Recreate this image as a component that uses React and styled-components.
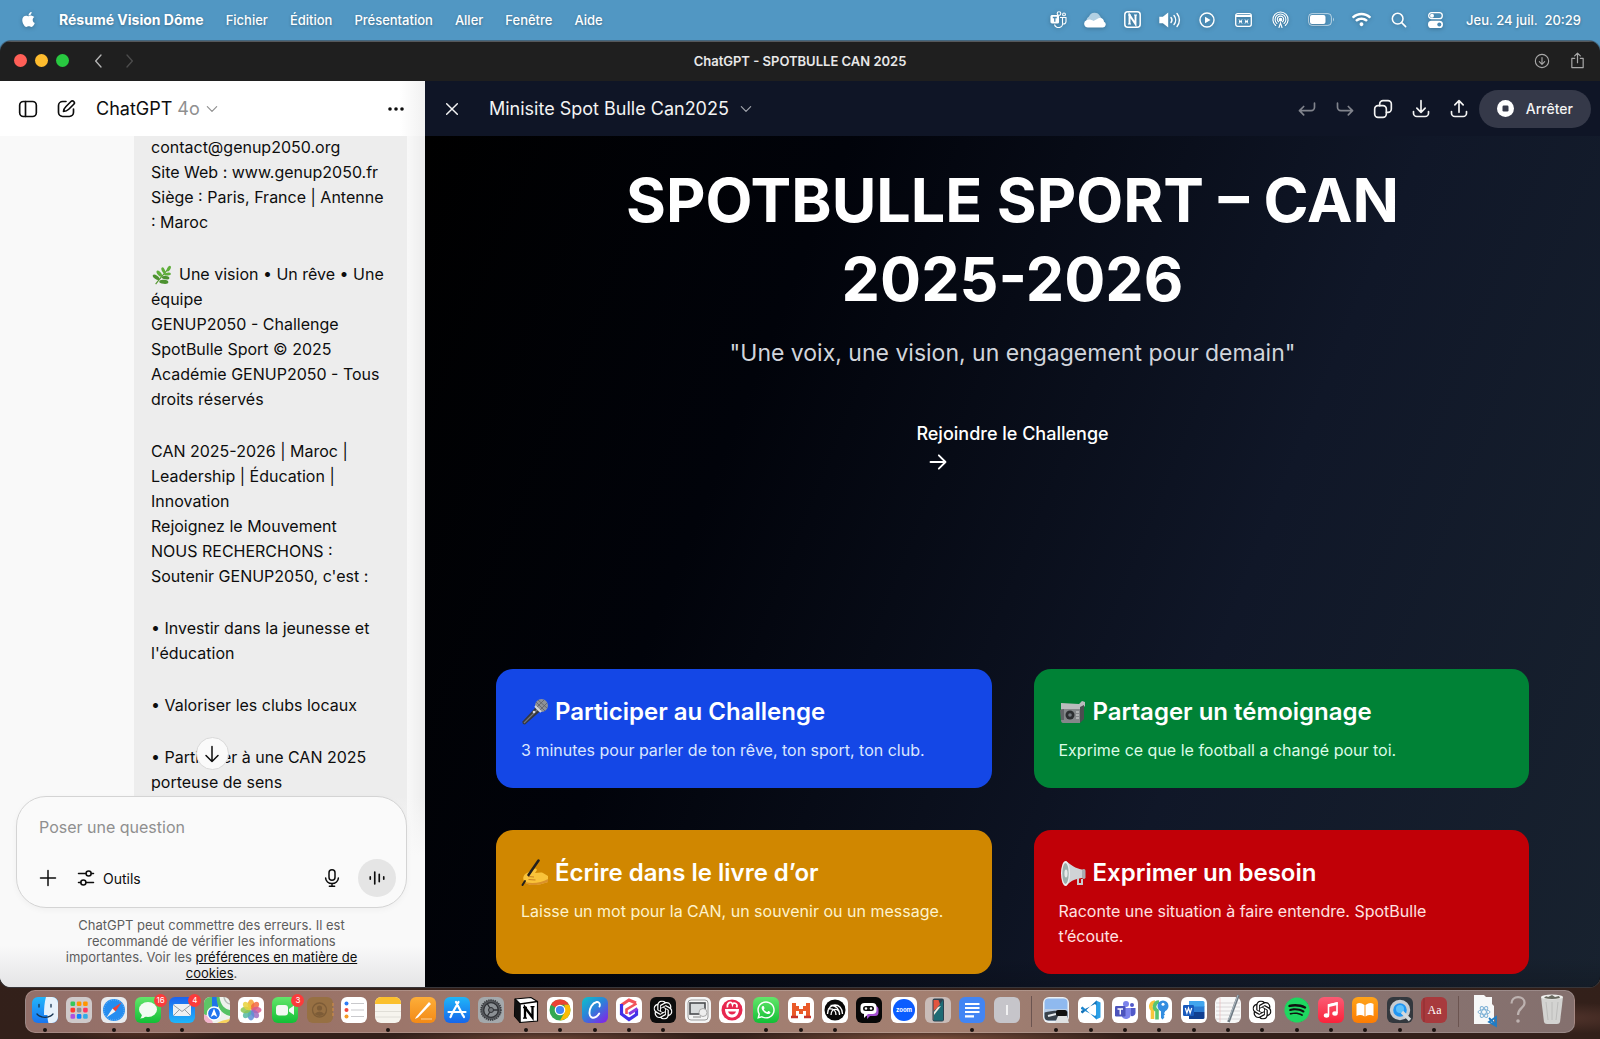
import React from "react";
import styled, { createGlobalStyle } from "styled-components";
import { FaApple, FaWhatsapp, FaSpotify, FaWifi } from "react-icons/fa";
import { SiOpenai } from "react-icons/si";

const GlobalStyle = createGlobalStyle`
  *, *::before, *::after { box-sizing: border-box; }
  html, body { margin: 0; }
  body { font-family: Inter, "Liberation Sans", sans-serif; color: #0d0d0d; }
  button, input, textarea { font: inherit; color: inherit; background: none; border: 0; padding: 0; margin: 0; }
  h1, h2, p { margin: 0; }
  svg { display: block; flex: none; }
`;

/* ---------- Desktop ---------- */

const Desktop = styled.div`
  height: 100vh;
  min-height: 640px;
  display: flex;
  flex-direction: column;
  overflow: hidden;
  background:
    radial-gradient(ellipse 90px 14px at 9% 99%, #5a3426, transparent),
    radial-gradient(ellipse 160px 10px at 34% 100%, #6b4536, transparent),
    radial-gradient(ellipse 200px 12px at 58% 100%, #7a4f3c, transparent),
    radial-gradient(ellipse 120px 16px at 97% 98%, #52342c, transparent),
    linear-gradient(to bottom, #5197c3 0, #5197c3 80px, #33221d 120px, #33201a 100%);
`;

const MenuBar = styled.header`
  height: 41px;
  padding: 0 19px 2px 20px;
  display: flex;
  align-items: center;
  justify-content: space-between;
  flex: none;
  color: #fff;
  font-size: 13px;
  font-weight: 500;
  text-shadow: 0 1px 3px rgba(0, 0, 0, 0.3);
  svg { filter: drop-shadow(0 1px 2px rgba(0, 0, 0, 0.25)); }
`;

const MenuList = styled.nav`
  display: flex;
  align-items: center;
  gap: 22px;
`;

const MenuItem = styled.button`
  font-weight: ${(p) => (p.$strong ? 700 : 500)};
  font-size: ${(p) => (p.$strong ? 14 : 13)}px;
  text-shadow: inherit;
`;

const StatusList = styled.div`
  display: flex;
  align-items: center;
`;

const StatusItem = styled.span`
  width: ${(p) => (p.$wide ? 44 : 37)}px;
  display: flex;
  justify-content: center;
`;

const Clock = styled.time`
  margin-left: 12px;
  white-space: pre;
`;

/* ---------- Window ---------- */

const Window = styled.main`
  flex: 1;
  min-height: 0;
  display: flex;
  flex-direction: column;
  border-radius: 11px;
  overflow: hidden;
  background: #1f1f1f;
  box-shadow: 0 0 0 1px rgba(60, 70, 80, 0.6);
`;

const TitleBar = styled.div`
  height: 40px;
  flex: none;
  display: grid;
  grid-template-columns: 1fr auto 1fr;
  align-items: center;
  padding: 0 14px 2px;
  border-top: 1px solid #55585b;
  color: #e8e8e8;
  font-size: 13px;
  font-weight: 600;
`;

const TitleGroup = styled.div`
  display: flex;
  align-items: center;
  justify-content: ${(p) => (p.$end ? "flex-end" : "flex-start")};
  gap: ${(p) => (p.$end ? 19 : 8)}px;
  color: #a8a8a8;
`;

const Light = styled.button`
  width: 13px;
  height: 13px;
  border-radius: 50%;
  background: ${(p) => p.$color};
`;

const NavButton = styled.button`
  width: 16px;
  height: 16px;
  margin-left: ${(p) => (p.$first ? 14 : 6)}px;
  color: ${(p) => (p.$dim ? "#4c4c4c" : "#b4b4b4")};
`;

const Panels = styled.div`
  flex: 1;
  min-height: 0;
  display: grid;
  grid-template-columns: 425px minmax(0, 1fr);
`;

/* ---------- Chat panel ---------- */

const Chat = styled.section`
  min-height: 0;
  display: flex;
  flex-direction: column;
  background: linear-gradient(to right, transparent 406px, rgba(0, 0, 0, 0.05)), #f9f9f9;
`;

const PanelHeader = styled.div`
  height: 55px;
  flex: none;
  display: flex;
  align-items: center;
  font-size: 18px;
`;

const ChatHeader = styled(PanelHeader)`
  padding: 0 20px 0 18px;
  gap: 18px;
  background: linear-gradient(to right, #fff 400px, #f1f1f1);
`;

const IconButton = styled.button`
  display: flex;
  align-items: center;
  justify-content: center;
  opacity: ${(p) => (p.$dim ? 0.5 : 1)};
`;

const ModelButton = styled.button`
  display: flex;
  align-items: center;
  gap: 5px;
  margin: 0 auto 0 2px;
  span { color: #8f8f8f; }
  svg { color: #8f8f8f; }
`;

const Thread = styled.div`
  flex: 1;
  min-height: 0;
  overflow: hidden;
  display: flex;
  flex-direction: column;
  align-items: flex-end;
  padding-right: 18px;
`;

const Bubble = styled.article`
  width: 273px;
  flex: 1 0 auto;
  margin-top: -1px;
  padding: 0 8px 40px 17px;
  background: #ededed;
  display: flex;
  flex-direction: column;
  gap: 27px;
  font-size: 16px;
  line-height: 25px;
`;

const Paragraph = styled.p`
  white-space: pre;
  svg { display: inline-block; vertical-align: -5px; margin-right: 6px; }
`;

const ComposerArea = styled.div`
  position: relative;
  flex: none;
  margin-top: -44px;
  padding: 0 18px 6px 16px;
  display: flex;
  flex-direction: column;
  background: linear-gradient(to bottom, transparent, #f9f9f9 60px, #f9f9f9 150px, #e4e4e6);
`;

const ScrollDown = styled.button`
  position: absolute;
  left: 50%;
  top: -59px;
  width: 33px;
  height: 33px;
  margin-left: -17px;
  border: 1px solid #d9d9d9;
  border-radius: 50%;
  background: #fafafa;
  display: grid;
  place-items: center;
`;

const Composer = styled.form`
  border: 1px solid #d4d4d4;
  border-radius: 30px;
  background: #fafafa;
  padding: 18px 10px 10px 22px;
  display: flex;
  flex-direction: column;
  gap: 20px;
  box-shadow: 0 2px 6px rgba(0, 0, 0, 0.04);
`;

const Prompt = styled.input`
  height: 24px;
  width: 100%;
  font-size: 16px;
  outline: 0;
  &::placeholder { color: #8f8f8f; opacity: 1; }
`;

const ComposerTools = styled.div`
  display: flex;
  align-items: center;
  gap: 20px;
  height: 38px;
`;

const ToolButton = styled.button`
  display: flex;
  align-items: center;
  gap: 8px;
  font-size: 14px;
  margin-right: auto;
`;

const VoiceButton = styled.button`
  width: 38px;
  height: 38px;
  margin-left: -3px;
  border-radius: 50%;
  background: #e5e5e5;
  display: grid;
  place-items: center;
`;

const Disclaimer = styled.p`
  margin-top: 9px;
  padding: 0 44px;
  text-align: center;
  font-size: 13px;
  line-height: 16px;
  color: #5d5d5d;
  a { color: #0d0d0d; }
`;

/* ---------- Canvas panel ---------- */

const Canvas = styled.section`
  min-height: 0;
  min-width: 0;
  display: flex;
  flex-direction: column;
  background: #000;
  color: #fff;
`;

const CanvasHeader = styled(PanelHeader)`
  padding: 0 9px 0 19px;
  gap: 18px;
  background: #0f1526;
  color: #f3f3f3;
`;

const CanvasTitle = styled.button`
  display: flex;
  align-items: center;
  gap: 10px;
  margin: 0 auto 0 11px;
  svg { color: #a3a6ae; }
`;

const StopButton = styled.button`
  height: 38px;
  margin-left: -8px;
  padding: 0 18px;
  border-radius: 19px;
  background: #353949;
  display: flex;
  align-items: center;
  gap: 12px;
  font-size: 14px;
  font-weight: 500;
`;

const Page = styled.div`
  flex: 1;
  min-height: 0;
  overflow: hidden;
  padding: 25px 71px 0;
  background:
    linear-gradient(to top, rgba(0, 0, 0, 0.15), transparent 30px),
    linear-gradient(112deg, #000 0%, #01030a 28%, #101728 66%, #18222f 100%);
`;

const Hero = styled.div`
  display: flex;
  flex-direction: column;
  align-items: center;
  text-align: center;
  padding-bottom: 197px;
`;

const HeroTitle = styled.h1`
  max-width: 900px;
  font-size: 61px;
  line-height: 79px;
  font-weight: 700;
`;

const Tagline = styled.p`
  margin-top: 17px;
  font-size: 23px;
  line-height: 34px;
  color: #d1d5dc;
`;

const JoinButton = styled.button`
  margin-top: 50px;
  display: grid;
  justify-items: start;
  font-size: 18px;
  line-height: 28px;
  font-weight: 500;
  svg { margin: 4px 0 0 12px; }
`;

const CardGrid = styled.div`
  display: grid;
  grid-template-columns: repeat(2, minmax(0, 1fr));
  gap: 42px;
`;

const Card = styled.article`
  padding: 25px;
  border-radius: 17px;
  background: ${(p) => p.$color};
`;

const CardTitle = styled.h2`
  display: flex;
  align-items: center;
  gap: 6px;
  font-size: 24px;
  line-height: 36px;
  font-weight: 600;
`;

const CardText = styled.p`
  margin-top: 8px;
  padding-right: 12px;
  font-size: 16px;
  line-height: 25px;
  color: ${(p) => p.$tint};
`;

/* ---------- Dock ---------- */

const DockBar = styled.nav`
  height: 43px;
  flex: none;
  margin: 3px 25px 6px;
  padding: 7px 8px 0 6px;
  border-radius: 10px;
  border: 1px solid rgba(255, 255, 255, 0.18);
  background: linear-gradient(to right, #93706a, #997166 15%, #a17e72 40%, #a37f70 60%, #8b7470 80%, #84706e);
  display: flex;
  justify-content: space-between;
  align-items: flex-start;
`;

const DockItem = styled.button`
  position: relative;
  width: 26px;
  height: 35px;
  display: flex;
  flex-direction: column;
  align-items: center;
  gap: 5px;
  margin-top: -1px;
`;

const RunningDot = styled.i`
  width: 4px;
  height: 4px;
  border-radius: 50%;
  background: #1b1210;
`;

const Badge = styled.span`
  position: absolute;
  top: -3px;
  right: -6px;
  min-width: 13px;
  height: 13px;
  border-radius: 7px;
  background: #fb3b3b;
  color: #fff;
  font-size: 8px;
  line-height: 13px;
  text-align: center;
`;

const DockSeparator = styled.span`
  width: 7px;
  height: 31px;
  margin-top: -2px;
  background: linear-gradient(#6b5450, #6b5450) center / 1px 100% no-repeat;
`;

/* ---------- Line icons ---------- */

const Line = ({ size = 20, width = 2, children, ...rest }) => (
  <svg width={size} height={size} viewBox="0 0 24 24" fill="none" stroke="currentColor" strokeWidth={width} strokeLinecap="round" strokeLinejoin="round" aria-hidden="true" {...rest}>
    {children}
  </svg>
);

const Chevron = ({ size = 14, d = "m4 8 8 8 8-8", width = 2 }) => (
  <Line size={size} width={width}><path d={d} /></Line>
);

const SidebarIcon = () => (
  <Line><rect x="2" y="3" width="20" height="18" rx="4.5" /><path d="M9 3v18" /></Line>
);
const EditIcon = () => (
  <Line><path d="M12 3H8a5 5 0 0 0-5 5v8a5 5 0 0 0 5 5h8a5 5 0 0 0 5-5v-4" /><path d="M9 15c0-3 1-4 3-6l6-6a2.3 2.3 0 0 1 3.300 3.300l-6 6c-2 2-3.300 2.700-6.300 2.700Z" /></Line>
);
const CloseIcon = () => <Line size={16} width={2.200}><path d="M4 4l16 16M20 4 4 20" /></Line>;
const DotsIcon = () => (
  <svg width="18" height="18" viewBox="0 0 18 18" fill="currentColor" aria-hidden="true"><circle cx="3" cy="9" r="1.800" /><circle cx="9" cy="9" r="1.800" /><circle cx="15" cy="9" r="1.800" /></svg>
);
const UndoIcon = () => <Line><path d="M8 9l-5 5 5 5M3 14h14a4 4 0 0 0 4-4V5" /></Line>;
const RedoIcon = () => <Line><path d="M16 9l5 5-5 5M21 14H7a4 4 0 0 1-4-4V5" /></Line>;
const CopyIcon = () => <Line><rect x="2" y="8" width="14" height="14" rx="4" /><path d="M8 8V6a4 4 0 0 1 4-4h6a4 4 0 0 1 4 4v6a4 4 0 0 1-4 4h-2" /></Line>;
const DownloadIcon = () => <Line><path d="M12 2v14M7 11l5 5 5-5M3 15v2a4 4 0 0 0 4 4h10a4 4 0 0 0 4-4v-2" /></Line>;
const UploadIcon = () => <Line><path d="M12 16V2M7 7l5-5 5 5M3 15v2a4 4 0 0 0 4 4h10a4 4 0 0 0 4-4v-2" /></Line>;
const StopIcon = () => (
  <svg width="17" height="17" viewBox="0 0 17 17" aria-hidden="true"><circle cx="8.500" cy="8.500" r="8.500" fill="#fff" /><rect x="5.500" y="5.500" width="6" height="6" rx="1.200" fill="#353949" /></svg>
);
const PlusIcon = () => <Line size={18}><path d="M12 2v20M2 12h20" /></Line>;
const SlidersIcon = () => (
  <Line size={18}><path d="M2 6h10M19 6h3M2 18h3M12 18h10" /><circle cx="15.500" cy="6" r="3.400" /><circle cx="8.500" cy="18" r="3.400" /></Line>
);
const MicIcon = () => (
  <Line size={18}><rect x="8" y="1" width="8" height="14" rx="4" /><path d="M3.500 12a8.500 7.500 0 0 0 17 0M12 19.500V23M8.500 23h7" /></Line>
);
const WaveIcon = () => <Line size={18} width={2.200}><path d="M3 10.500v3M9 4v16M15 7v10M21 10.500v3" /></Line>;
const ArrowDown = () => <Line size={18}><path d="M12 2v20M4 14l8 8 8-8" /></Line>;
const ArrowRight = () => <Line size={20} width={2.200}><path d="M3 12h18M13 4l8 8-8 8" /></Line>;

/* ---------- Menu bar status icons ---------- */

const TeamsMono = () => (
  <svg width="17" height="17" viewBox="0 0 17 17" fill="none" stroke="#fff" strokeWidth="1.100" aria-hidden="true">
    <rect x="1" y="4.500" width="7.500" height="7.500" rx="1" fill="#fff" /><path d="M2.800 6.500h4M4.800 6.500V10.700" stroke="#4787b1" strokeWidth="1.300" />
    <circle cx="9" cy="2.600" r="1.800" /><circle cx="14" cy="3.400" r="1.400" />
    <path d="M10 6.500h6v4a2.500 2.500 0 0 1-3 2.500M12.500 6.500v5a4 4 0 0 1-8 2" />
  </svg>
);
const CloudMono = () => (
  <svg width="23" height="16" viewBox="0 0 23 16" aria-hidden="true">
    <path d="M4 12a4.500 4.500 0 0 1 1-7.500A6 6 0 0 1 16 4l2 3L9 12Z" fill="#b3d0e2" />
    <path d="M4 15.500a3.800 3.800 0 0 1-1.500-7.300C5 7 7 7.500 9.500 9L14 6.500c3-1.500 6 .5 6 3.300a3 3 0 0 1-1 5.700Z" fill="#fff" />
  </svg>
);
const NMono = () => (
  <svg width="17" height="17" viewBox="0 0 17 17" fill="none" stroke="#fff" aria-hidden="true">
    <rect x=".8" y=".8" width="15.400" height="15.400" rx="3" strokeWidth="1.500" /><path d="M5.500 13V4l6 9V4" strokeWidth="1.900" /><path d="M4 4h3M10 4h3M4 13h3" strokeWidth="1" />
  </svg>
);
const SoundMono = () => (
  <svg width="22" height="16" viewBox="0 0 22 16" fill="none" stroke="#fff" strokeWidth="1.400" strokeLinecap="round" aria-hidden="true">
    <path d="M1 5.500h3L8.500 2v12L4 10.500H1Z" fill="#fff" /><path d="M12 5.500a4 4 0 0 1 0 5M15 3.500a7 7 0 0 1 0 9M18 1.500a10 10 0 0 1 0 13" />
  </svg>
);
const PlayMono = () => (
  <svg width="16" height="16" viewBox="0 0 16 16" aria-hidden="true"><circle cx="8" cy="8" r="7" fill="none" stroke="#fff" strokeWidth="1.400" /><path d="M6 4.700v6.600L11.500 8Z" fill="#fff" /></svg>
);
const PanelMono = () => (
  <svg width="17" height="14" viewBox="0 0 17 14" fill="none" stroke="#fff" aria-hidden="true">
    <rect x=".7" y=".7" width="15.600" height="12.600" rx="2" strokeWidth="1.300" /><path d="M1 3h15" strokeWidth="2" /><path d="m4 6.500 3 4m0-4-3 4M4 8.500h3M10 6.500l3 4m0-4-3 4M10 8.500h3" strokeWidth="1" />
  </svg>
);
const AirdropMono = () => (
  <svg width="17" height="17" viewBox="0 0 17 17" fill="none" stroke="#fff" strokeWidth="1.100" strokeLinecap="round" aria-hidden="true">
    <path d="M3.700 14.500a7.600 7.600 0 1 1 9.600 0M5 12.500a5.400 5.400 0 1 1 7 0M6.500 10.800a3.200 3.200 0 1 1 4 0" /><circle cx="8.500" cy="8.700" r="1.300" fill="#fff" /><path d="M7 16.500 8.500 12l1.500 4.500" />
  </svg>
);
const BatteryMono = () => (
  <svg width="27" height="13" viewBox="0 0 27 13" aria-hidden="true">
    <rect x=".6" y=".6" width="22.800" height="11.800" rx="3.500" fill="none" stroke="#fff" strokeOpacity=".6" /><rect x="2" y="2" width="15.500" height="9" rx="2" fill="#fff" /><path d="M25 4.500v4q1.600-2 0-4Z" fill="#fff" opacity=".7" />
  </svg>
);
const ControlMono = () => (
  <svg width="15" height="16" viewBox="0 0 15 16" fill="none" aria-hidden="true">
    <rect x=".7" y=".7" width="13.600" height="6" rx="3" stroke="#fff" strokeWidth="1.300" /><circle cx="4" cy="3.700" r="2" fill="#fff" /><rect y="8.800" width="15" height="7.200" rx="3.600" fill="#fff" /><circle cx="11.300" cy="12.400" r="2" fill="#4787b1" />
  </svg>
);

/* ---------- Emoji drawings ---------- */

const Herb = () => (
  <svg width="22" height="20" viewBox="0 0 22 22" aria-hidden="true">
    <path d="M4 21C8 16 13 10 19 3" stroke="#5a9a35" strokeWidth="1.300" fill="none" />
    <g fill="#5fae3a"><ellipse cx="18.500" cy="4" rx="1.700" ry="3.400" transform="rotate(30 18.500 4)" /><ellipse cx="12.500" cy="6" rx="1.700" ry="3.600" transform="rotate(-25 12.500 6)" /><ellipse cx="17" cy="10" rx="3.800" ry="1.600" transform="rotate(-5 17 10)" /><ellipse cx="8" cy="9.500" rx="2" ry="4" transform="rotate(-40 8 9.500)" /></g>
    <g fill="#4c9130"><ellipse cx="15" cy="14" rx="4.200" ry="1.800" transform="rotate(8 15 14)" /><ellipse cx="4.500" cy="13.500" rx="2" ry="4.200" transform="rotate(-55 4.500 13.500)" /><ellipse cx="13" cy="18.500" rx="5" ry="2.200" transform="rotate(5 13 18.500)" /></g>
  </svg>
);
const MicEmoji = () => (
  <svg width="28" height="28" viewBox="0 0 28 28" aria-hidden="true">
    <path d="M15 9 1.500 23.500q-.5 3 2.500 3L19.500 13Z" fill="#36383d" /><path d="M16 12 3 25" stroke="#73757b" strokeWidth="1.200" />
    <circle cx="20.500" cy="7.500" r="6.500" fill="#8f9297" /><path d="m15 4 9 9M17 2l9 8M15 10l8-8M18 13l8-8" stroke="#5d6066" strokeWidth=".8" /><path d="m14 8 6 6" stroke="#d5d7da" strokeWidth="2" /><circle cx="13" cy="14" r="1.300" fill="#d8dadd" />
  </svg>
);
const CameraEmoji = () => (
  <svg width="28" height="28" viewBox="0 0 28 28" aria-hidden="true">
    <path d="M2 9h19v16H4q-2 0-2-3Z" fill="#84878a" /><path d="m2 5 18 1 3-3 3 1v4l-4 3H2Z" fill="#b9bbbd" /><path d="m21 9 4-2v14l-4 4Z" fill="#4b4d50" /><circle cx="11" cy="17" r="4.500" fill="#2c2e31" /><circle cx="11" cy="17" r="1.800" fill="#71777d" /><path d="M17 14h3M17 17h3M17 20h3" stroke="#d9dbdc" /><path d="m1 12 4-1v11H2Z" fill="#606367" />
  </svg>
);
const WritingEmoji = () => (
  <svg width="28" height="28" viewBox="0 0 28 28" aria-hidden="true">
    <path d="M4 23c-3-3-2-7 2-9l6-4c3-1.500 5 .5 3 2.500l-1 1.500c3 0 6-1 8 0l5 3v6c-6 2-9 3-13 3-4 .3-8-.5-10-3Z" fill="#f9c33a" /><path d="M27 20v3c-6 2-9 3-13 3-4 .3-8-.5-10-3 7 2 16 1 23-3Z" fill="#d9912a" /><path d="m7 17.500 6 .5M7.500 20.500l7 .5" stroke="#c98220" strokeWidth="1.100" /><path d="M17.500 1.500 7.500 16" stroke="#22201e" strokeWidth="2.500" strokeLinecap="round" /><path d="m4 22-2.500 4" stroke="#22201e" strokeWidth="2" strokeLinecap="round" />
  </svg>
);
const MegaphoneEmoji = () => (
  <svg width="28" height="28" viewBox="0 0 28 28" aria-hidden="true">
    <path d="M7 2c7 6 12 8 18 9v8c-6 0-13 2-18 8Z" fill="#d0d3d6" /><ellipse cx="6.500" cy="14.500" rx="4.500" ry="12.500" fill="#eceeef" /><ellipse cx="6.500" cy="14.500" rx="3.200" ry="10.500" fill="#9db0ac" /><ellipse cx="7" cy="14.500" rx="1.600" ry="4" fill="#e7eae9" /><rect x="23" y="10" width="3.500" height="10" rx="1.700" fill="#a9adb1" /><path d="M19 19v6h4v-5" fill="none" stroke="#c8cbcd" strokeWidth="2" />
  </svg>
);

/* ---------- Dock icons ---------- */

const Tile = ({ fill = "#fff", children }) => (
  <svg width="26" height="26" viewBox="0 0 26 26" overflow="visible" aria-hidden="true">
    {fill !== "none" && <rect width="26" height="26" rx="6" fill={fill} />}
    {children}
  </svg>
);

const Gradient = ({ id, from, to }) => (
  <linearGradient id={id} x1="0" y1="0" x2="0" y2="1"><stop stopColor={from} /><stop offset="1" stopColor={to} /></linearGradient>
);

const petals = ["#f7a331", "#f26a3f", "#d85a8b", "#9c6cc0", "#5c8ed6", "#55b7a2", "#8cc653", "#e8d13b"];
const launchpad = ["#35c759", "#ff9500", "#ff9500", "#ff3b30", "#8e8e93", "#ff375f", "#af52de", "#0a84ff", "#32ade6"];

const dockApps = [
  { name: "Finder", running: true, art: <Tile fill="url(#g-finder)"><Gradient id="g-finder" from="#22b5fb" to="#1a75f0" /><path d="M14 0h6a6 6 0 0 1 6 6v14a6 6 0 0 1-6 6h-3.500c-1-3-1-6-1-8H12C12 11 12.500 5 14 0Z" fill="#e6f1fb" /><path d="M7 7.500v2.500M19 7.500v2.500M5 17c4 4.500 12 4.500 16 0" stroke="#16324f" strokeWidth="1.300" fill="none" strokeLinecap="round" /></Tile> },
  { name: "Launchpad", art: <Tile fill="#cfc9ca">{launchpad.map((c, i) => <rect key={i} x={4.500 + (i % 3) * 6.300} y={4.500 + Math.floor(i / 3) * 6.300} width="4.600" height="4.600" rx="1.300" fill={c} />)}</Tile> },
  { name: "Safari", running: true, art: <Tile fill="#e9ebee"><circle cx="13" cy="13" r="11" fill="#258df0" /><circle cx="13" cy="13" r="10" fill="none" stroke="#8ec6f8" strokeDasharray=".6 1.500" /><path d="m20.500 5.500-9 6 3 3Z" fill="#f04438" /><path d="m5.500 20.500 6-9 3 3Z" fill="#f5f5f5" /></Tile> },
  { name: "Messages", running: true, badge: "16", art: <Tile fill="url(#g-msg)"><Gradient id="g-msg" from="#63e66a" to="#12bf36" /><ellipse cx="13" cy="12.500" rx="9" ry="7.500" fill="#f3fbf3" /><path d="M7 17q0 3-2 4.500 4 0 6-2.500Z" fill="#f3fbf3" /></Tile> },
  { name: "Mail", running: true, badge: "4", art: <Tile fill="url(#g-mail)"><Gradient id="g-mail" from="#1c62ef" to="#1fb6fa" /><rect x="4" y="7" width="18" height="12" rx="2" fill="#eef0f2" /><path d="m4.500 8 8.500 6.500L21.500 8M4.500 18.500l6-6M21.500 18.500l-6-6" fill="none" stroke="#8b929a" strokeWidth=".9" /></Tile> },
  { name: "Plans", art: <Tile fill="#eef1ec"><path d="M0 6a6 6 0 0 1 6-6h2v15L0 19Z" fill="#5ec466" /><path d="M8 0h6v10H8Z" fill="#1f74ea" /><path d="M15.500 0c1 8 5 12 10.500 13v6C17 17 13 10 12.500 0Z" fill="#56c263" /><path d="M20 0q1 6 6 7" stroke="#b8bdb8" strokeWidth="1.500" fill="none" /><path d="M0 17c5 3 8 5 9 9H6q-6 0-6-6Z" fill="#f3b3cb" /><path d="M13 26q5-3 13-4-1 4-6 4Z" fill="#f8d15b" /><circle cx="10" cy="16.500" r="6.500" fill="#2274ee" stroke="#fff" strokeWidth="1.300" /><path d="m10 11.500 3.300 8.500L10 18l-3.300 2Z" fill="#fff" /></Tile> },
  { name: "Photos", art: <Tile>{petals.map((c, i) => <ellipse key={c} cx="13" cy="7.500" rx="3.300" ry="5" fill={c} opacity=".85" transform={`rotate(${i * 45} 13 13)`} />)}</Tile> },
  { name: "FaceTime", badge: "3", art: <Tile fill="url(#g-msg)"><rect x="4" y="8" width="12" height="10.500" rx="3" fill="#f3f8f3" /><path d="m17 12 5-3.500v9.500l-5-3.500Z" fill="#f3f8f3" /></Tile> },
  { name: "Contacts", art: <Tile fill="#977043"><path d="M26 6v14" stroke="#c98a4a" strokeWidth="1.300" strokeDasharray="3 2" /><circle cx="12.500" cy="13" r="7" fill="none" stroke="#7d5c37" strokeWidth="1.300" /><circle cx="12.500" cy="11" r="2.600" fill="#7d5c37" /><path d="M7.500 17q5-5 10 0-5 4-10 0Z" fill="#7d5c37" /></Tile> },
  { name: "Rappels", art: <Tile><circle cx="5.500" cy="6.500" r="2" fill="#2e7cf6" /><circle cx="5.500" cy="13" r="2" fill="#f1483f" /><circle cx="5.500" cy="19.500" r="2" fill="#f59a23" /><path d="M10 6.500h13M10 13h13M10 19.500h13" stroke="#c9c9cc" /></Tile> },
  { name: "Notes", running: true, art: <Tile fill="#f6f4ee"><path d="M0 7V6a6 6 0 0 1 6-6h14a6 6 0 0 1 6 6v1Z" fill="#fbc02d" /><path d="M0 14.500h26M0 20h26" stroke="#dbd8d0" strokeWidth=".8" /></Tile> },
  { name: "Pages", art: <Tile fill="url(#g-pages)"><Gradient id="g-pages" from="#fdae39" to="#f38a16" /><path d="M6 20 19 5l2 2L8 20.500 5 22Z" fill="#fff" /><path d="M11 22h11" stroke="#fbd09a" /></Tile> },
  { name: "App Store", art: <Tile fill="url(#g-store)"><Gradient id="g-store" from="#1fb5f8" to="#1766ea" /><path d="M14.500 5 7.300 18M12 5l7 13.500M4.500 15h17M6.500 20l.7-1.300M20 20l-.8-1.500" stroke="#fff" strokeWidth="2.200" strokeLinecap="round" /></Tile> },
  { name: "Réglages", art: <Tile fill="#a4a9ac"><circle cx="13" cy="13" r="10" fill="#55585c" stroke="#34363a" strokeWidth="1.500" strokeDasharray="1.300 .9" /><circle cx="13" cy="13" r="7.300" fill="#8b9094" stroke="#2f3135" strokeWidth="1.300" /><path d="M13 13h7M13 13 9.500 7M13 13l-3.500 6" stroke="#2f3135" strokeWidth="1.300" /><circle cx="13" cy="13" r="2.500" fill="#717579" stroke="#2f3135" /></Tile> },
  { name: "Notion", running: true, art: <Tile fill="none"><path d="m2 2 16-1.500 6.500 4V24L7 25.500 1.500 19Z" fill="#fff" stroke="#000" strokeWidth="1.200" /><path d="m2 2 5 5 17.500-2.500M7 7v18.500" stroke="#000" strokeWidth="1.500" fill="none" /><path d="m2 2 5 5v18.500L1.500 19Z" fill="#111" /><path d="M12 21V10.500l7.500 10V9.500" stroke="#000" strokeWidth="2.300" fill="none" /><path d="M10 10.500h4M17.500 9.700h4M10 21.200h4" stroke="#000" strokeWidth="1.300" /></Tile> },
  { name: "Chrome", running: true, art: <Tile><circle cx="13" cy="13" r="10.500" fill="#33a853" /><path d="M13 13 3.900 7.800A10.500 10.500 0 0 1 22.100 7.800H13Z" fill="#ea4335" /><path d="M22.100 7.800A10.500 10.500 0 0 1 13 23.500L17.500 15.500V7.800Z" fill="#fbbc05" /><circle cx="13" cy="13" r="5.300" fill="#fff" /><circle cx="13" cy="13" r="4.100" fill="#4285f4" /></Tile> },
  { name: "Canva", running: true, art: <Tile fill="url(#g-canva)"><linearGradient id="g-canva" x1="0" y1="0" x2=".8" y2="1"><stop stopColor="#0cc2cb" /><stop offset=".5" stopColor="#2b83d9" /><stop offset="1" stopColor="#7c2be6" /></linearGradient><path d="M17.500 9.500c1-2.500-.5-5-2.800-4.500-4.500 1-7.500 6.500-7.200 11.500.2 4 3.500 5 6 3.700 1.700-.8 2.900-2.200 3.700-3.700" stroke="#fff" strokeWidth="1.900" fill="none" strokeLinecap="round" /></Tile> },
  { name: "Genially", running: true, art: <Tile><path d="M20 6 13 3 5.500 8" stroke="#f2545b" strokeWidth="3" fill="none" /><path d="M5.500 7v10l7.500 5.500 7.500-5V12" stroke="#4230e8" strokeWidth="3.200" fill="none" /><path d="m20.500 6.500-10 6V17" stroke="#f2545b" strokeWidth="2.600" fill="none" /><path d="m13 17 8.500-5.500" stroke="#8a3be0" strokeWidth="3" /></Tile> },
  { name: "ChatGPT", running: true, art: <Tile fill="#0c0c0c"><SiOpenai x="3.500" y="3.500" size="19" color="#fff" /></Tile> },
  { name: "Capture", art: <Tile fill="#f4f4f4"><rect x="3" y="3" width="20" height="20" rx="3" fill="none" stroke="#9b9b9b" /><rect x="5" y="6" width="15" height="11" fill="#d8dbdc" stroke="#4a4c4f" strokeWidth="1.600" /><circle cx="18" cy="15.500" r="4" fill="#eee" stroke="#aaa" /><path d="M8 20h8" stroke="#888" /></Tile> },
  { name: "Boo", art: <Tile><circle cx="13" cy="13" r="10.500" fill="#e8274f" /><path d="M6 12h14c0 5-3 8.500-7 8.500S6 17 6 12Z" fill="#fff" /><path d="M8.500 10.500c-1-5 4-7 5-3 1-3 6-1 4 3" fill="none" stroke="#fff" strokeWidth="1.700" /><path d="M9 14.500h8q-1 3-4 3t-4-3Z" fill="#e8274f" /></Tile> },
  { name: "WhatsApp", running: true, art: <Tile fill="url(#g-msg)"><FaWhatsapp x="3" y="3" size="20" color="#fff" /></Tile> },
  { name: "Mistral", running: true, art: <Tile><path d="M4 20V6h4v3h3v3h4V9h3V6h4v14h-4v-6h-3v3h-4v-3H8v6Z" fill="#ea5a2a" /><path d="M3 20h7M16 20h7" stroke="#c8352a" strokeWidth="2.600" /></Tile> },
  { name: "NordPass", running: true, art: <Tile><circle cx="13" cy="13" r="10.500" fill="#080808" /><path d="M5.500 17c0-12 15-12 15 0M9 18c0-8 9-7 8.500 0M6 12c6-1 8 2 8 6M8.500 8.500c6 0 9 4 9 9" stroke="#fff" strokeWidth="1.300" fill="none" /></Tile> },
  { name: "Poe", art: <Tile fill="#080808"><path d="M9 9h10q3.500 0 3.500 3.500v3Q22.500 19 19 19h-5l-3 3v-3H9Z" fill="#a34fd0" /><rect x="4.500" y="6" width="16" height="11" rx="4" fill="#fff" /><path d="M8 16v5l5-5Z" fill="#fff" /><rect x="7" y="9" width="11" height="5" rx="2.500" fill="#111" /><circle cx="10" cy="11.500" r="1.200" fill="#fff" /><circle cx="15" cy="11.500" r="1.200" fill="#fff" /></Tile> },
  { name: "Zoom", art: <Tile><circle cx="13" cy="13" r="11" fill="#0b5cff" /><text x="13" y="15" fontSize="6" fontWeight="700" textAnchor="middle" fill="#fff">zoom</text></Tile> },
  { name: "iPhone", art: <Tile fill="#c9bcb8"><rect x="7.500" y="1.500" width="11.500" height="23" rx="2" fill="#2e4250" /><path d="M8.500 3h5l3.500 10-8.500 10Z" fill="#e2553f" /><path d="M18 3c-4 5-5 8-9.500 11v9.500H18Z" fill="#1e6b74" /><path d="M13 10 9 15v3l7-9Z" fill="#f4e9df" /></Tile> },
  { name: "Docs", running: true, art: <Tile fill="#4285f4"><path d="M6 7h14.500M6 11h14.500M6 15h14.500M6 19.300h9" stroke="#fff" strokeWidth="2.200" /></Tile> },
  { name: "Raccourci", art: <Tile fill="#c6c5ca"><path d="M13 8v10" stroke="#fff" strokeWidth="1.500" /></Tile> },
  { name: "Aperçu", separated: true, running: true, art: <Tile fill="#edf0f3"><rect x="1.500" y="1.500" width="23" height="22" rx="4" fill="#8fb9ef" /><path d="M1.500 12h23v5h-23Z" fill="#b9cde6" /><path d="M1.500 15.500c7-2 15-2 23-1v5q0 4-4 4h-15q-4 0-4-4Z" fill="#39424c" /><path d="m5 19 8-2" stroke="#e6eaed" strokeWidth="2" /><rect x="13" y="13" width="11" height="6" rx="2" fill="#111" /><path d="m15 19-3 7h14l-2-7Z" fill="#dfe1e2" /></Tile> },
  { name: "VS Code", running: true, art: <Tile><path d="m18 3.500 4.500 2v15l-4.500 2Z" fill="#2a9fe6" /><path d="m18.500 3.500-14 13-1.500-1.200 0-1.300L17 7l1.500 1.500Z" fill="#1372b8" /><path d="m18.500 22.500-14-13L3 10.700V12l14 7 1.500-1.500Z" fill="#1b86cf" /><path d="M18 8.500v9L12 13Z" fill="#fff" /></Tile> },
  { name: "Teams", running: true, art: <Tile><circle cx="14" cy="7" r="3" fill="#7b83eb" /><circle cx="20" cy="8" r="2" fill="#5059c9" /><path d="M10 11h9v6a5 5 0 0 1-9 3Z" fill="#7b83eb" /><path d="M19 11h4.500v5a3.500 3.500 0 0 1-4.500 3Z" fill="#5059c9" /><rect x="3" y="9" width="10.500" height="10.500" rx="1.200" fill="#4b53bc" /><path d="M5.500 12h5.500M8.250 12v5.500" stroke="#fff" strokeWidth="1.400" /></Tile> },
  { name: "Mots de passe", running: true, art: <Tile><path d="M9 5a4.500 4.500 0 0 0-2.500 8v9" stroke="#f7c63c" strokeWidth="3.600" fill="none" /><path d="M13 5a4.500 4.500 0 0 0-2 8.500v9" stroke="#57c471" strokeWidth="3.600" fill="none" /><circle cx="17" cy="9" r="5.500" fill="#338de0" /><path d="M15 12h4v3l-1 1 1 1.500-1.500 1.500 1 1-1.800 2.500L15 21Z" fill="#338de0" /><circle cx="17" cy="7.300" r="1.500" fill="#fff" /></Tile> },
  { name: "Word", running: true, art: <Tile><path d="M8 4h14a1.500 1.500 0 0 1 1.500 1.500V10H8Z" fill="#41a5ee" /><path d="M8 9.500h15.500V15H8Z" fill="#2b7cd3" /><path d="M8 15h15.500v5.500A1.500 1.500 0 0 1 22 22H8Z" fill="#103f91" /><rect x="2" y="8" width="11" height="11" rx="1.200" fill="#185abd" /><path d="m4.300 11 1.600 5 1.600-5 1.600 5 1.600-5" stroke="#fff" strokeWidth="1.200" fill="none" /></Tile> },
  { name: "TextEdit", running: true, art: <Tile fill="#f7f7f7"><path d="M1 6h24M1 10h24M1 14h24M1 18h24M1 22h24" stroke="#d4d0d2" strokeWidth=".9" /><path d="M5 1v24" stroke="#e9b3b3" strokeWidth=".6" /><path d="m23.500-2-10 27" stroke="#6d7881" strokeWidth="2.600" /><path d="m23-2-9.500 25" stroke="#b4bfc7" strokeWidth=".9" /></Tile> },
  { name: "ChatGPT Atlas", running: true, art: <Tile><SiOpenai x="3.500" y="3.500" size="19" color="#111" /></Tile> },
  { name: "Spotify", running: true, art: <Tile fill="none"><circle cx="13" cy="13" r="12" fill="#101010" /><FaSpotify x="0" y="0" size="26" color="#1ed760" /></Tile> },
  { name: "Musique", running: true, art: <Tile fill="url(#g-music)"><Gradient id="g-music" from="#fb5b74" to="#fa233b" /><path d="M10.500 18V8l8.500-2v10" stroke="#fff" strokeWidth="1.600" fill="none" /><path d="M10 7.500 19.500 5v3L10 10.300Z" fill="#fff" /><ellipse cx="8.500" cy="18.500" rx="2.700" ry="2.200" fill="#fff" /><ellipse cx="17" cy="16.500" rx="2.700" ry="2.200" fill="#fff" /></Tile> },
  { name: "Livres", running: true, art: <Tile fill="url(#g-books)"><Gradient id="g-books" from="#ffa41a" to="#fc7c03" /><path d="M12.500 8Q8 4.500 4.500 7v12q4-2 8 .5ZM13.500 8q4.500-3.500 8-1v12q-4-2-8 .5Z" fill="#fff" /></Tile> },
  { name: "QuickTime", running: true, art: <Tile fill="#33383e"><circle cx="13" cy="13" r="8.500" fill="#2196f3" stroke="#c7ccd1" strokeWidth="3.400" /><circle cx="13" cy="12" r="4" fill="#5cc0fb" /><path d="m15 15 8 8" stroke="#d5d9dc" strokeWidth="3.400" /></Tile> },
  { name: "Dictionnaire", running: true, art: <Tile fill="#a83a3d"><path d="M3 1v24" stroke="#8c2c30" /><text x="13.500" y="17" fontSize="12" fontFamily="Liberation Serif, serif" textAnchor="middle" fill="#fff">Aa</text></Tile> },
  { name: "Téléchargements", separated: true, art: <Tile fill="none"><path d="M3-2h10l2 2h6v7l2 2v18H3Z" fill="#f7f8f8" /><g fill="none" stroke="#7fb2d6"><ellipse cx="13" cy="15" rx="6" ry="2.300" /><ellipse cx="13" cy="15" rx="6" ry="2.300" transform="rotate(60 13 15)" /><ellipse cx="13" cy="15" rx="6" ry="2.300" transform="rotate(120 13 15)" /></g><path d="m25 20-7 5 7 4Zm-7 1 7 7" fill="none" stroke="#1f7cc4" strokeWidth="1.800" /></Tile> },
  { name: "Inconnu", art: <Tile fill="none"><path d="M6.500 6.500c-.5-8.500 13.500-8.500 13-.5 0 5-6.500 5-6.500 12" stroke="#bdb2b0" strokeWidth="2.200" fill="none" /><circle cx="13" cy="24" r="1.800" fill="#bdb2b0" /></Tile> },
  { name: "Corbeille", art: <Tile fill="none"><path d="M2 0h22l-3 25q-.4 2-3 2H8q-2.600 0-3-2Z" fill="#d3d3d1" /><path d="M7 5l2 18M13 5v18M19 5l-2 18" stroke="#bcbcba" /><ellipse cx="13" cy="0" rx="11" ry="2.600" fill="#efefed" /><path d="M5 1q2-3 4-1l4-2 3 2 4-1 1 2q-8 2-16 0Z" fill="#68695f" /></Tile> },
];

/* ---------- Content ---------- */

const menus = ["Fichier", "Édition", "Présentation", "Aller", "Fenêtre", "Aide"];

const statusIcons = [
  { key: "teams", icon: <TeamsMono /> },
  { key: "cloud", icon: <CloudMono /> },
  { key: "notion", icon: <NMono /> },
  { key: "sound", icon: <SoundMono /> },
  { key: "play", icon: <PlayMono /> },
  { key: "panel", icon: <PanelMono /> },
  { key: "airdrop", icon: <AirdropMono /> },
  { key: "battery", wide: true, icon: <BatteryMono /> },
  { key: "wifi", icon: <FaWifi size={19} /> },
  { key: "search", icon: <Line size={16} width={2.300}><circle cx="10" cy="10" r="8" /><path d="m16 16 6 6" /></Line> },
  { key: "control", icon: <ControlMono /> },
];

const paragraphs = [
  "contact@genup2050.org\nSite Web : www.genup2050.fr\nSiège : Paris, France | Antenne\n: Maroc",
  <React.Fragment key="vision"><Herb />{"Une vision • Un rêve • Une\néquipe\nGENUP2050 - Challenge\nSpotBulle Sport © 2025\nAcadémie GENUP2050 - Tous\ndroits réservés"}</React.Fragment>,
  "CAN 2025-2026 | Maroc |\nLeadership | Éducation |\nInnovation\nRejoignez le Mouvement\nNOUS RECHERCHONS :\nSoutenir GENUP2050, c'est :",
  "• Investir dans la jeunesse et\nl'éducation",
  "• Valoriser les clubs locaux",
  "• Participer à une CAN 2025\nporteuse de sens",
];

const cards = [
  { icon: <MicEmoji />, title: "Participer au Challenge", text: "3 minutes pour parler de ton rêve, ton sport, ton club.", color: "#1447e6", tint: "#dbe6fe" },
  { icon: <CameraEmoji />, title: "Partager un témoignage", text: "Exprime ce que le football a changé pour toi.", color: "#008236", tint: "#dcfce7" },
  { icon: <WritingEmoji />, title: "Écrire dans le livre d’or", text: "Laisse un mot pour la CAN, un souvenir ou un message.", color: "#d08700", tint: "#fef3cd" },
  { icon: <MegaphoneEmoji />, title: "Exprimer un besoin", text: "Raconte une situation à faire entendre. SpotBulle t’écoute.", color: "#c10007", tint: "#ffe2e2" },
];

export default function App() {
  return (
    <Desktop>
      <GlobalStyle />
      <MenuBar>
        <MenuList aria-label="Menus">
          <MenuItem aria-label="Apple"><FaApple size={17} /></MenuItem>
          <MenuItem $strong>Résumé Vision Dôme</MenuItem>
          {menus.map((m) => <MenuItem key={m}>{m}</MenuItem>)}
        </MenuList>
        <StatusList>
          {statusIcons.map((s) => <StatusItem key={s.key} $wide={s.wide}>{s.icon}</StatusItem>)}
          <Clock>{"Jeu. 24 juil.  20:29"}</Clock>
        </StatusList>
      </MenuBar>

      <Window>
        <TitleBar>
          <TitleGroup>
            <Light $color="#ff5f57" aria-label="Fermer" />
            <Light $color="#febc2e" aria-label="Réduire" />
            <Light $color="#28c840" aria-label="Agrandir" />
            <NavButton $first aria-label="Précédent"><Chevron size={16} d="m15 3-8 9 8 9" /></NavButton>
            <NavButton $dim aria-label="Suivant"><Chevron size={16} d="m9 3 8 9-8 9" /></NavButton>
          </TitleGroup>
          <span>ChatGPT - SPOTBULLE CAN 2025</span>
          <TitleGroup $end>
            <IconButton aria-label="Téléchargements"><Line size={16} width={1.700}><circle cx="12" cy="12" r="10" /><path d="M12 7v10M8 13l4 4 4-4" /></Line></IconButton>
            <IconButton aria-label="Partager"><Line size={17} width={1.700}><path d="M8 9H4v13h16V9h-4M12 15V2M8 5.500 12 1.500l4 4" /></Line></IconButton>
          </TitleGroup>
        </TitleBar>

        <Panels>
          <Chat>
            <ChatHeader>
              <IconButton aria-label="Barre latérale"><SidebarIcon /></IconButton>
              <IconButton aria-label="Nouveau chat"><EditIcon /></IconButton>
              <ModelButton>ChatGPT <span>4o</span> <Chevron size={14} /></ModelButton>
              <IconButton aria-label="Plus"><DotsIcon /></IconButton>
            </ChatHeader>
            <Thread>
              <Bubble>
                {paragraphs.map((p, i) => <Paragraph key={i}>{p}</Paragraph>)}
              </Bubble>
            </Thread>
            <ComposerArea>
              <ScrollDown aria-label="Aller en bas"><ArrowDown /></ScrollDown>
              <Composer onSubmit={(e) => e.preventDefault()}>
                <Prompt aria-label="Poser une question" placeholder="Poser une question" />
                <ComposerTools>
                  <IconButton type="button" aria-label="Ajouter"><PlusIcon /></IconButton>
                  <ToolButton type="button"><SlidersIcon />Outils</ToolButton>
                  <IconButton type="button" aria-label="Dicter"><MicIcon /></IconButton>
                  <VoiceButton type="button" aria-label="Mode vocal"><WaveIcon /></VoiceButton>
                </ComposerTools>
              </Composer>
              <Disclaimer>
                ChatGPT peut commettre des erreurs. Il est recommandé de vérifier les informations importantes. Voir les <a href="#cookies">préférences en matière de cookies</a>.
              </Disclaimer>
            </ComposerArea>
          </Chat>

          <Canvas>
            <CanvasHeader>
              <IconButton aria-label="Fermer le canevas"><CloseIcon /></IconButton>
              <CanvasTitle>Minisite Spot Bulle Can2025 <Chevron size={14} /></CanvasTitle>
              <IconButton $dim aria-label="Annuler"><UndoIcon /></IconButton>
              <IconButton $dim aria-label="Rétablir"><RedoIcon /></IconButton>
              <IconButton aria-label="Copier"><CopyIcon /></IconButton>
              <IconButton aria-label="Télécharger"><DownloadIcon /></IconButton>
              <IconButton aria-label="Partager"><UploadIcon /></IconButton>
              <StopButton><StopIcon />Arrêter</StopButton>
            </CanvasHeader>
            <Page>
              <Hero>
                <HeroTitle>SPOTBULLE SPORT – CAN 2025-2026</HeroTitle>
                <Tagline>"Une voix, une vision, un engagement pour demain"</Tagline>
                <JoinButton>Rejoindre le Challenge<ArrowRight /></JoinButton>
              </Hero>
              <CardGrid>
                {cards.map((c) => (
                  <Card key={c.title} $color={c.color}>
                    <CardTitle>{c.icon}{c.title}</CardTitle>
                    <CardText $tint={c.tint}>{c.text}</CardText>
                  </Card>
                ))}
              </CardGrid>
            </Page>
          </Canvas>
        </Panels>
      </Window>

      <DockBar aria-label="Dock">
        {dockApps.map((app) => (
          <React.Fragment key={app.name}>
            {app.separated && <DockSeparator />}
            <DockItem aria-label={app.name}>
              {app.art}
              {app.running && <RunningDot />}
              {app.badge && <Badge>{app.badge}</Badge>}
            </DockItem>
          </React.Fragment>
        ))}
      </DockBar>
    </Desktop>
  );
}
